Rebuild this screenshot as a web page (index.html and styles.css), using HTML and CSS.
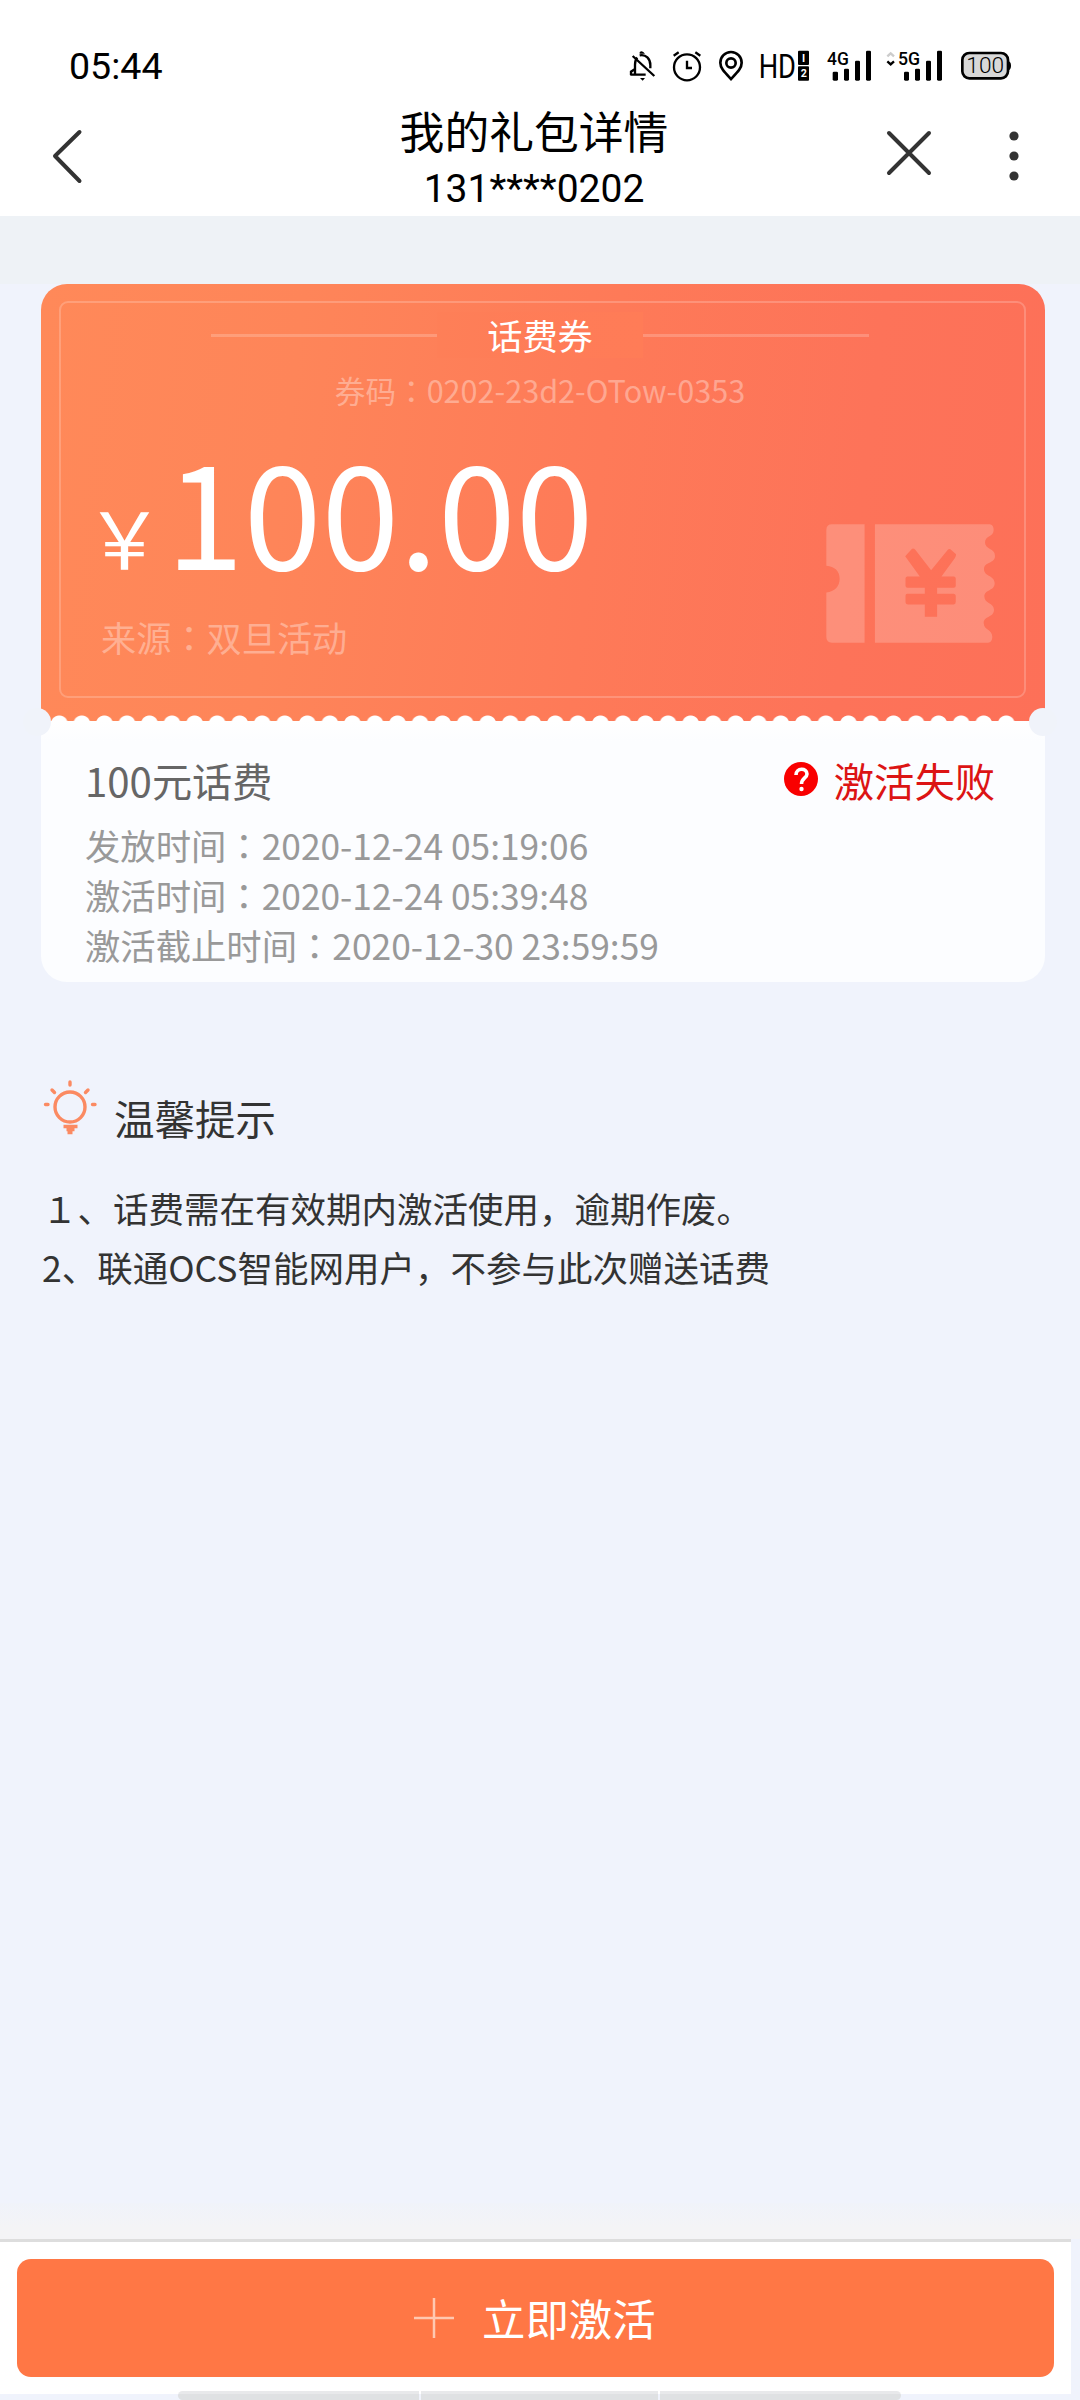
FILE: index.html
```html
<!DOCTYPE html>
<html lang="zh-CN">
<head>
<meta charset="utf-8">
<title>我的礼包详情</title>
<link rel="stylesheet" href="styles.css">
</head>
<body>
<div class="screen">
  <div class="statusbar">
    <span class="clock">05:44</span>
    <svg class="status-icons" viewBox="84 55 1155 105" fill="none" stroke="#000" stroke-width="7">
      <g><path d="M105 132V105C105 96 107 89 112 84M119 77C138 73 151 87 151 106V116M93 136V126L104 119M91 135H137M98 79L163 139"/><path d="M119 72V67Q127 60 135 72M120 145H135L128 153Z" fill="#000" stroke="none"/></g>
      <g><circle cx="261" cy="113" r="39"/><path d="M261 93V115H276M221 78L236 68M286 68L301 78"/></g>
      <g stroke-width="8"><path d="M393 148C374 128 361 116 361 99A32 32 0 0 1 425 99C425 116 412 128 393 148Z"/><circle cx="393" cy="100" r="14"/></g>
      <g fill="#000" stroke="none">
        <text transform="translate(476 144) scale(.81 1)" font-size="101">HD</text>
        <rect x="594" y="63" width="33" height="43" rx="3"/><rect x="594" y="110" width="33" height="43" rx="3"/>
        <text class="sim" x="606" y="96" font-size="32">I</text><text class="sim" x="602" y="143" font-size="32">2</text>
      </g>
      <g fill="#000" stroke="none">
        <text transform="translate(681 107) scale(.92 1)" font-size="57" font-weight="500">4G</text>
        <rect x="698" y="126" width="16" height="27" rx="4"/><rect x="732" y="117" width="15" height="36" rx="4"/><rect x="765" y="93" width="15" height="60" rx="4"/><rect x="798" y="63" width="15" height="90" rx="4"/>
      </g>
      <path d="M862 80L872 71L882 80" stroke="#ccc"/><path d="M862 95L872 104L882 95"/>
      <g fill="#000" stroke="none">
        <text transform="translate(894 107) scale(.93 1)" font-size="57" font-weight="500">5G</text>
        <rect x="912" y="126" width="15" height="27" rx="4"/><rect x="945" y="117" width="15" height="36" rx="4"/><rect x="978" y="93" width="15" height="60" rx="4"/><rect x="1011" y="63" width="15" height="90" rx="4"/>
      </g>
      <g><rect x="1087" y="70" width="137" height="76" rx="21" fill="#d8d8d8" stroke-width="8"/><path d="M1224 94Q1233 96 1233 108Q1233 120 1224 122Z" fill="#000" stroke="none"/>
        <text x="1099" y="130" font-size="68" font-weight="300" fill="#000" stroke="none">100</text></g>
    </svg>
  </div>
  <header class="navbar">
    <svg class="back" viewBox="0 0 34 60" fill="none" stroke="#333" stroke-width="4" stroke-linecap="round" stroke-linejoin="round"><path d="M30.500 6L6 30L30.500 55"/></svg>
    <div class="heading"><h1>我的礼包详情</h1><p>131****0202</p></div>
    <svg class="close" viewBox="0 0 50 50" fill="none" stroke="#333" stroke-width="4" stroke-linecap="round"><path d="M5 5L45 45M45 5L5 45"/></svg>
    <svg class="more" viewBox="0 0 10 50" fill="#333"><circle cx="5" cy="5" r="4.6"/><circle cx="5" cy="25" r="4.6"/><circle cx="5" cy="45" r="4.6"/></svg>
  </header>
  <main class="content">
    <section class="coupon">
      <div class="coupon-frame">
        <div class="coupon-head"><i class="rule"></i><h2>话费券</h2><i class="rule"></i></div>
        <p class="code">券码<span lang="zh-TW" class="colon">：</span>0202-23d2-OTow-0353</p>
        <div class="coupon-main">
          <div>
            <p class="amount"><span class="yen">￥</span>100.00</p>
            <p class="source">来源<span lang="zh-TW" class="colon">：</span>双旦活动</p>
          </div>
          <svg class="ticket" viewBox="138 131 508 356">
            <path d="M156 131H254V487H156Q139 487 139 470V336C164 334 179 318 179 295S164 258 139 256V148Q139 131 156 131Z"/>
            <path fill-rule="evenodd" d="M285 131H630Q642 133 642 148C642 170 616 164 616 186C616 208 646 202 646 226C646 250 613 242 613 266C613 288 645 284 645 308C645 332 614 326 614 348C614 370 643 366 643 388C643 412 612 406 612 428C612 450 638 446 638 470Q637 487 625 487H285ZM376 227L396 205Q401 202 407 208L454 269L503 209Q507 204 512 206L529 221Q529 227 525 233L485 288H523Q528 289 528 294V316Q528 322 522 322H472V340H522Q528 341 528 346V364Q528 372 522 372H472V409H435V372H385Q377 372 377 364V346Q377 340 382 340H435V322H383Q377 322 377 316V294Q377 289 382 288H420Z"/>
          </svg>
        </div>
      </div>
      <div class="scallops"></div>
      <i class="notch notch-left"></i><i class="notch notch-right"></i>
    </section>
    <section class="detail">
      <div class="detail-head">
        <h3>100元话费</h3>
        <span class="state"><svg viewBox="0 0 34 34"><circle cx="17" cy="17" r="17" fill="#f90000"/><path d="M12 13C12 5.500 23 5.500 23 12C23 16 17.500 16 17.500 22" fill="none" stroke="#fff" stroke-width="3.600"/><circle cx="17.500" cy="27" r="2.200" fill="#fff"/></svg>激活失败</span>
      </div>
      <p>发放时间<span lang="zh-TW" class="colon">：</span>2020-12-24 05:19:06</p>
      <p>激活时间<span lang="zh-TW" class="colon">：</span>2020-12-24 05:39:48</p>
      <p>激活截止时间<span lang="zh-TW" class="colon">：</span>2020-12-30 23:59:59</p>
    </section>
    <section class="tips">
      <div class="tips-head">
        <svg viewBox="0 0 56 56" fill="none" stroke="#fb8a62" stroke-width="3.400"><circle cx="28" cy="27" r="15"/><path stroke-linecap="round" d="M28 2V5M10 10L12.500 12.500M46 10L43.500 12.500M3.500 24.500H6M50.500 24.500H53"/><path d="M21.500 46.500H35.500M24.500 49.500H32.500M25.500 52.500H30.500"/></svg>
        <h3>温馨提示</h3>
      </div>
      <p>１、话费需在有效期内激活使用，逾期作废。</p>
      <p>2、联通OCS智能网用户，不参与此次赠送话费</p>
    </section>
  </main>
  <div class="fade"></div>
  <footer class="actions">
    <button class="activate"><svg viewBox="0 0 40 40"><path d="M20 0V40M0 20H40" stroke="#ffc8b1" stroke-width="2.500"/></svg><span>立即激活</span></button>
  </footer>
  <div class="homebar"><i></i><i></i><i></i></div>
</div>
</body>
</html>
```
FILE: styles.css
```css
* { box-sizing: border-box; margin: 0; padding: 0; }
body { width: 1080px; background: #f0f3fc; font-family: "Noto Sans CJK SC", sans-serif; }
h1, h2, h3 { font-weight: 400; }
svg { display: block; flex: none; }
.screen { width: 1080px; height: 2400px; overflow: hidden; position: relative; display: flex; flex-direction: column; }

.statusbar { height: 100px; background: #fff; display: flex; justify-content: space-between; align-items: flex-start; padding: 48px 67px 0 69px; font-family: Roboto, sans-serif; }
.clock { font-size: 37.6px; line-height: 37px; color: #000; }
.status-icons { width: 385px; height: 35px; overflow: visible; font-family: Roboto, sans-serif; }
.sim { fill: #fff; font-weight: 700; }

.navbar { height: 116px; background: #fff; display: grid; grid-template-columns: 49px 34px 1fr 50px 75px 10px 61px; align-items: start; }
.back { grid-column: 2; width: 34px; height: 60px; margin-top: 26px; }
.heading { grid-column: 3; width: 500px; justify-self: start; margin-left: 201px; text-align: center; color: #000; }
.heading h1 { font-size: 44.8px; line-height: 60px; }
.heading p { font-family: Roboto, sans-serif; font-size: 39px; line-height: 48px; margin-top: 5px; }
.close { grid-column: 4; width: 50px; height: 50px; margin-top: 28px; }
.more { grid-column: 6; width: 10px; height: 50px; margin-top: 31px; }

.content { flex: 1; background: linear-gradient(#eef2f6 68px, #f0f3fc 68px); padding: 68px 35px 0 41px; }
.colon { font-family: "Noto Sans CJK TC", sans-serif; }

.coupon { position: relative; height: 437px; border-radius: 26px 26px 0 0; background: linear-gradient(97deg, #ff8959 0%, #fe8559 25%, #fe7a58 55%, #fd7359 80%, #fd7058 100%); padding: 17px 19px 0 18px; }
.coupon-frame { height: 397px; border: 2px solid rgba(255,255,255,.2); border-radius: 9px; color: #fff; }
.coupon-head { display: flex; align-items: center; height: 46px; margin: 9px 155px 0 150px; }
.coupon-head .rule { flex: 1; height: 3px; background: rgba(255,255,255,.2); }
.coupon-head h2 { width: 206px; height: 46px; line-height: 46px; font-size: 35.2px; text-align: center; background: linear-gradient(90deg, rgba(255,125,85,.3), #ff7c57); }
.code { font-size: 30.6px; line-height: 40px; margin: 12px 5px 2px 0; text-align: center; color: rgba(255,255,255,.35); }
.coupon-main { display: flex; justify-content: space-between; margin: 0 29px 0 34px; }
.amount { font-size: 140px; line-height: 200px; height: 200px; white-space: nowrap; margin-top: -3px; }
.yen { font-size: 79px; display: inline-block; width: 81px; margin-left: -10px; line-height: 80px; }
.source { font-size: 35.2px; line-height: 50px; margin: 3px 0 0 6px; color: rgba(255,255,255,.35); }
.ticket { width: 169px; height: 119px; margin-top: 112px; fill: rgba(255,255,255,.2); }
.scallops { height: 6px; margin: 17px 9px 0 -11px; background: radial-gradient(circle at 11.3px 9px, #fff 8px, transparent 9px) 0 0 / 22.55px 6px repeat-x; }
.notch { position: absolute; width: 28px; height: 28px; border-radius: 50%; background: #f0f3fa; top: 424px; z-index: 1; }
.notch-left { left: -18px; }
.notch-right { right: -12px; }

.detail { height: 261px; background: linear-gradient(#fff, #fcfdff 20px); border-radius: 0 0 26px 26px; padding: 31px 50px 0 44px; color: #999; }
.detail-head { display: flex; justify-content: space-between; height: 68px; line-height: 55px; font-size: 40.3px; }
.detail h3 { font-size: 40.2px; color: #666; }
.state { display: flex; color: #dc1414; }
.state svg { width: 34px; height: 34px; margin: 10px 16px 0 0; }
.detail p { font-size: 35.35px; line-height: 50px; }

.tips { color: #333; padding: 98px 0 0 1px; }
.tips-head { display: flex; height: 98px; gap: 16px; }
.tips-head svg { width: 56px; height: 56px; }
.tips-head h3 { font-size: 40.5px; line-height: 56px; margin-top: 10px; }
.tips p { font-size: 35.5px; line-height: 59px; }

.fade { height: 36px; background: linear-gradient(#f0f3fa, #f4f4f6 70%); }
.actions { width: 1071px; height: 155px; background: #fff; border-top: 3px solid #ddd; padding: 17px 17px 0; }
.activate { width: 1037px; height: 118px; border: 0; border-radius: 14px; background: #ff7745; color: #fff; font: 400 43.4px "Noto Sans CJK SC", sans-serif; display: flex; align-items: center; padding: 0 0 0 397px; gap: 28px; }
.activate svg { width: 40px; height: 40px; }
.activate span { margin-top: -2px; }
.homebar { height: 6px; display: flex; gap: 2px; padding-left: 178px; }
.homebar i { height: 9px; width: 241px; margin-top: -3px; background: linear-gradient(#e8e9eb 3px, #dfe1e3 3px); }
.homebar i:nth-child(2) { width: 237px; }
.homebar i:first-child { border-radius: 5px 0 0 5px; }
.homebar i:last-child { border-radius: 0 5px 5px 0; }
```
